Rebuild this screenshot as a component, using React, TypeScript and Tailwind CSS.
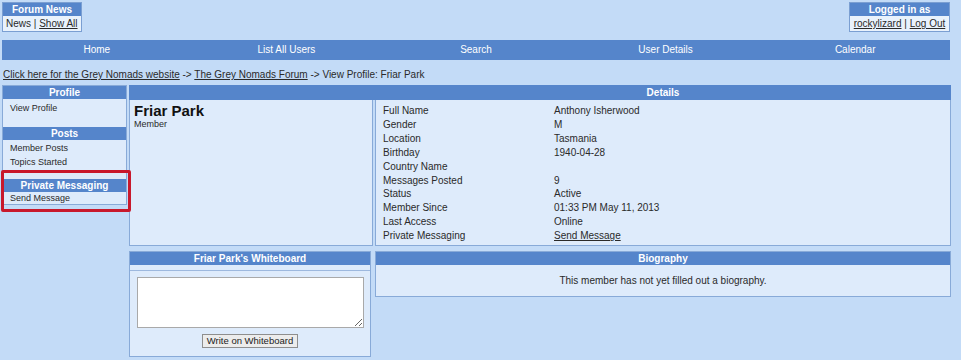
import React from 'react';

const navItems = ['Home', 'List All Users', 'Search', 'User Details', 'Calendar'];

const details: [string, string][] = [
    ['Full Name', 'Anthony Isherwood'],
    ['Gender', 'M'],
    ['Location', 'Tasmania'],
    ['Birthday', '1940-04-28'],
    ['Country Name', ''],
    ['Messages Posted', '9'],
    ['Status', 'Active'],
    ['Member Since', '01:33 PM May 11, 2013'],
    ['Last Access', 'Online'],
];

function SideHeader({ title }: { title: string }) {
    return (
        <div className="h-[13px] bg-[#5585cb] text-white font-bold text-[10px] leading-[13px] text-center">
            {title}
        </div>
    );
}

export default function App() {
    return (
        <div className="relative w-[961px] h-[360px] overflow-hidden bg-[#c3dbf7] text-[#2a2a2a] font-['Liberation_Sans',Arial,sans-serif] text-[10px]">
            {/* Top boxes */}
            <div className="flex justify-between pt-[2px] pl-[2px] pr-[11px]">
                <div className="w-[80px] border border-[#7b9fd2]">
                    <div className="h-[13px] bg-[#5585cb] text-white font-bold text-[10px] leading-[13px] text-center">Forum News</div>
                    <div className="h-[15px] bg-[#e9f2fc] px-[3px] leading-[15px] text-[10px]">
                        News | <span className="underline">Show All</span>
                    </div>
                </div>
                <div className="w-[101px] border border-[#7b9fd2]">
                    <div className="h-[13px] bg-[#5585cb] text-white font-bold text-[10px] leading-[13px] text-center">Logged in as</div>
                    <div className="h-[15px] bg-[#e9f2fc] leading-[15px] text-[10px] text-center">
                        <span className="underline">rockylizard</span> | <span className="underline">Log Out</span>
                    </div>
                </div>
            </div>

            {/* Nav bar */}
            <div className="mt-[8px] ml-[2px] w-[948px] h-[20px] bg-[#5585cb] grid grid-cols-5 text-white text-[10px] leading-[20px] text-center">
                {navItems.map((item) => (
                    <div key={item}>{item}</div>
                ))}
            </div>

            {/* Breadcrumb */}
            <div className="mt-[8px] pl-[3px] h-[14px] leading-[14px] text-[10px]">
                <span className="underline">Click here for the Grey Nomads website</span> -&gt;{' '}
                <span className="underline">The Grey Nomads Forum</span> -&gt; View Profile: Friar Park
            </div>

            {/* Main */}
            <div className="flex mt-[3px] pl-[2px]">
                {/* Sidebar */}
                <div className="w-[125px] h-[120px] border border-[#88aad8] bg-[#deebfb] text-[9px]">
                    <SideHeader title="Profile" />
                    <div className="pt-[2px] pb-[12px] px-[7px] leading-[14px]">
                        <div>View Profile</div>
                    </div>
                    <SideHeader title="Posts" />
                    <div className="pt-[1px] pb-[10px] px-[7px] leading-[14px]">
                        <div>Member Posts</div>
                        <div>Topics Started</div>
                    </div>
                    <SideHeader title="Private Messaging" />
                    <div className="px-[7px] leading-[13px]">
                        <div>Send Message</div>
                    </div>
                </div>

                {/* Content */}
                <div className="ml-[2px] w-[822px] flex flex-col">
                    <div className="h-[15px] bg-[#5585cb] flex text-white font-bold text-[10px] leading-[15px]">
                        <div className="w-[246px]" />
                        <div className="flex-1 text-center">Details</div>
                    </div>
                    <div className="flex gap-[2px] h-[146px]">
                        <div className="w-[244px] border border-t-0 border-[#88aad8] bg-[#deebfb] px-[4px] pt-[3px]">
                            <div className="text-[15px] font-bold leading-[16px] text-[#111]">Friar Park</div>
                            <div className="text-[9px] leading-[10px]">Member</div>
                        </div>
                        <div className="flex-1 border border-t-0 border-[#88aad8] bg-[#deebfb] pt-[4px] px-[7px] leading-[13.9px]">
                            {details.map(([k, v]) => (
                                <div key={k} className="flex">
                                    <div className="w-[171px]">{k}</div>
                                    <div>{v}</div>
                                </div>
                            ))}
                            <div className="flex">
                                <div className="w-[171px]">Private Messaging</div>
                                <div className="underline">Send Message</div>
                            </div>
                        </div>
                    </div>

                    {/* Bottom row */}
                    <div className="flex gap-[4px] mt-[5px] items-start">
                        <div className="w-[242px] h-[106px] border border-[#88aad8] bg-[#deebfb] flex flex-col">
                            <div className="h-[13px] bg-[#5585cb] text-white font-bold text-[10px] leading-[13px] text-center">
                                Friar Park&apos;s Whiteboard
                            </div>
                            <div className="h-[6px] border-b border-[#9db8de]" />
                            <div className="px-[7px] pt-[6px] flex flex-col items-center">
                                <textarea
                                    readOnly
                                    className="w-[227px] h-[51px] bg-white border border-[#a9a9a9] resize-y"
                                />
                                <button className="mt-[6px] h-[14px] px-[4px] bg-[#ececec] border border-[#8e8e8e] text-[9.5px] leading-[12px] text-[#222] font-['Liberation_Sans',Arial,sans-serif]">
                                    Write on Whiteboard
                                </button>
                            </div>
                        </div>
                        <div className="flex-1 h-[46px] border border-[#88aad8] bg-[#deebfb] flex flex-col">
                            <div className="h-[13px] bg-[#5585cb] text-white font-bold text-[10px] leading-[13px] text-center">
                                Biography
                            </div>
                            <div className="flex-1 flex items-center justify-center">
                                This member has not yet filled out a biography.
                            </div>
                        </div>
                    </div>
                </div>
            </div>

            {/* Highlight annotation */}
            <div className="absolute left-[1px] top-[170px] w-[130px] h-[42px] border-[3px] border-[#c8182c] rounded-[2px] pointer-events-none" />
        </div>
    );
}
